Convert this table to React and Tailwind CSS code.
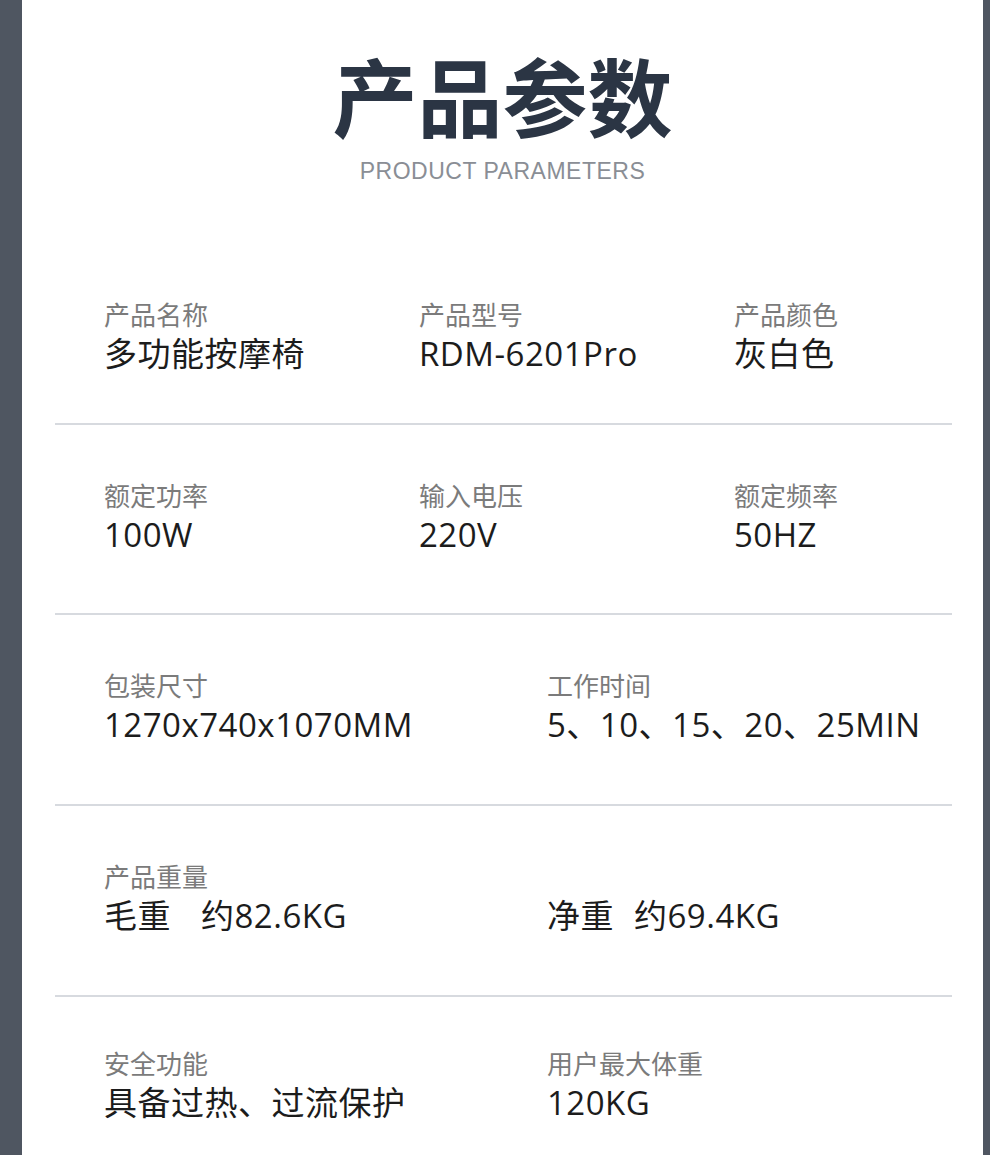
const font = { fontFamily: '"Noto Sans CJK SC", "Noto Sans", sans-serif' };
const valueFont = { fontFamily: '"Open Sans", "Noto Sans CJK SC", sans-serif' };

const rows = [
    {
        cols: 'grid-cols-[315px_315px_1fr]',
        height: 'h-[180px]',
        items: [
            { label: '产品名称', value: '多功能按摩椅' },
            { label: '产品型号', value: 'RDM-6201Pro' },
            { label: '产品颜色', value: '灰白色' },
        ],
    },
    {
        cols: 'grid-cols-[315px_315px_1fr]',
        height: 'h-[190px]',
        items: [
            { label: '额定功率', value: '100W' },
            { label: '输入电压', value: '220V' },
            { label: '额定频率', value: '50HZ' },
        ],
    },
    {
        cols: 'grid-cols-[443px_1fr]',
        height: 'h-[191px]',
        items: [
            { label: '包装尺寸', value: '1270x740x1070MM' },
            { label: '工作时间', value: '5、10、15、20、25MIN' },
        ],
    },
    {
        cols: 'grid-cols-[443px_1fr]',
        height: 'h-[191px]',
        items: [
            {
                label: '产品重量',
                value: (
                    <>
                        <span className="mr-[30px]">毛重</span>约82.6KG
                    </>
                ),
            },
            {
                label: '',
                value: (
                    <>
                        <span className="mr-[20px]">净重</span>约69.4KG
                    </>
                ),
            },
        ],
    },
];

const lastRow = [
    { label: '安全功能', value: '具备过热、过流保护' },
    { label: '用户最大体重', value: '120KG' },
];

const Cell = ({ label, value }) => (
    <div className="flex flex-col">
        <div className="h-[32px] text-[26px] leading-[32px] text-[#7b7b7b]">{label}</div>
        <div
            className="h-[44px] mt-[2px] text-[33px] leading-[44px] tracking-[0.5px] text-[#1c1c1c] whitespace-nowrap"
            style={valueFont}
        >
            {value}
        </div>
    </div>
);

export default function App() {
    return (
        <div className="flex h-[1155px] w-[990px] overflow-hidden bg-white" style={font}>
            <div className="w-[22px] shrink-0 bg-[#4f5661]" />

            <div className="flex-1 flex flex-col">
                {/* Header */}
                <div className="h-[245px] flex flex-col items-center pt-[46px]">
                    <h1 className="text-[85px] leading-[96px] font-bold text-[#2b3544]">产品参数</h1>
                    <p
                        className="mt-[15px] text-[23px] leading-[28px] tracking-[0.5px] text-[#8a8e95]"
                        style={{ fontFamily: '"Liberation Sans", Arial, sans-serif' }}
                    >
                        PRODUCT PARAMETERS
                    </p>
                </div>

                {/* Parameter rows */}
                <div className="ml-[33px] mr-[31px] flex flex-col">
                    {rows.map((row, i) => (
                        <div
                            key={i}
                            className={`${row.height} grid ${row.cols} pl-[49px] border-b-2 border-[#d7dadf] ${i === 0 ? 'pt-[53px]' : 'pt-[54px]'}`}
                        >
                            {row.items.map((item, j) => (
                                <Cell key={j} label={item.label} value={item.value} />
                            ))}
                        </div>
                    ))}
                    <div className="grid grid-cols-[443px_1fr] pl-[49px] pt-[50px]">
                        {lastRow.map((item, j) => (
                            <Cell key={j} label={item.label} value={item.value} />
                        ))}
                    </div>
                </div>
            </div>

            <div className="w-[7px] shrink-0 bg-[#4f5661]" />
        </div>
    );
}
